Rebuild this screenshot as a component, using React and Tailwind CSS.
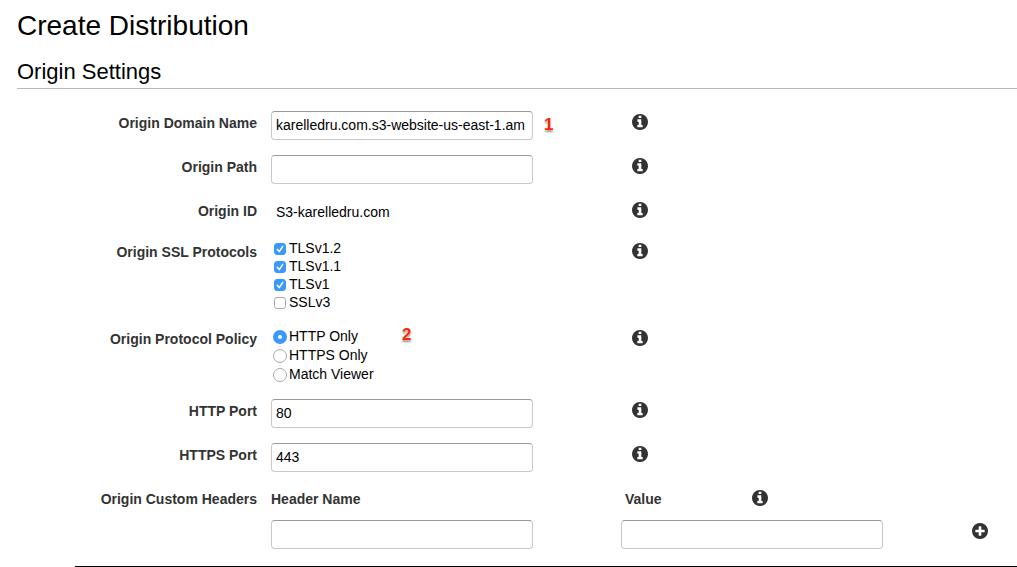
import React, { useState } from 'react'

const inputClass =
  'block h-[29px] w-[262px] rounded border border-[#c8c8c8] border-t-[#999] bg-white px-1 pb-0.5 text-sm text-black outline-none'

function InfoIcon() {
  return (
    <svg viewBox="128 128 1536 1536" className="size-4" fill="currentColor">
      <path d="M1152 1376v-160q0-14-9-23t-23-9h-96v-512q0-14-9-23t-23-9h-320q-14 0-23 9t-9 23v160q0 14 9 23t23 9h96v320h-96q-14 0-23 9t-9 23v160q0 14 9 23t23 9h448q14 0 23-9t9-23zM1024 480v-160q0-14-9-23t-23-9h-192q-14 0-23 9t-9 23v160q0 14 9 23t23 9h192q14 0 23-9t9-23zM1664 896q0 209-103 385.5t-279.5 279.5-385.5 103-385.5-103-279.5-279.5-103-385.5 103-385.5 279.5-279.5 385.5-103 385.5 103 279.5 279.5 103 385.5z" />
    </svg>
  )
}

function PlusIcon() {
  return (
    <svg viewBox="128 128 1536 1536" className="size-4" fill="currentColor">
      <path d="M1344 960v-128q0-26-19-45t-45-19h-256v-256q0-26-19-45t-45-19h-128q-26 0-45 19t-19 45v256h-256q-26 0-45 19t-19 45v128q0 26 19 45t45 19h256v256q0 26 19 45t45 19h128q26 0 45-19t19-45v-256h256q26 0 45-19t19-45zM1664 896q0 209-103 385.5t-279.5 279.5-385.5 103-385.5-103-279.5-279.5-103-385.5 103-385.5 279.5-279.5 385.5-103 385.5 103 279.5 279.5 103 385.5z" />
    </svg>
  )
}

function IconButton({ label, children }) {
  return (
    <button type="button" aria-label={label} className="flex h-[22px] items-center text-[#333]">
      {children}
    </button>
  )
}

function Marker({ children }) {
  return (
    <span className="text-[17px] leading-7 font-bold text-[#fb2605] [text-shadow:0_0_2px_#fff,0_2px_2px_#888]">
      {children}
    </span>
  )
}

function Row({ label, htmlFor, children }) {
  return (
    <div className="grid grid-cols-[240px_336px_1fr] gap-x-[14px]">
      {htmlFor ? (
        <label htmlFor={htmlFor} className="text-right text-sm leading-6 font-bold text-[#333]">
          {label}
        </label>
      ) : (
        <span className="text-right text-sm leading-6 font-bold text-[#333]">{label}</span>
      )}
      {children}
      <div className="pl-[11px]">
        <IconButton label={`About ${label}`}>
          <InfoIcon />
        </IconButton>
      </div>
    </div>
  )
}

function Checkbox({ label, checked, onChange }) {
  return (
    <label className="flex h-[18px] items-center gap-[3px] pl-[3px] text-sm leading-4">
      <span className="relative flex">
        <input
          type="checkbox"
          checked={checked}
          onChange={onChange}
          className="size-3 appearance-none rounded-[3px] border border-[#aaa] bg-white checked:border-[#3b99fc] checked:bg-[#3b99fc]"
        />
        {checked && (
          <svg viewBox="0 0 12 12" className="pointer-events-none absolute inset-0 size-3">
            <path d="M3.4 6.4 5.3 8.6 8.7 3.4" fill="none" stroke="#fff" strokeWidth="1.5" strokeLinecap="round" />
          </svg>
        )}
      </span>
      <span className="pb-0.5">{label}</span>
    </label>
  )
}

function Radio({ label, checked, onChange }) {
  return (
    <label className="flex h-[19px] items-center gap-0.5 pl-0.5 text-sm leading-[19px]">
      <input
        type="radio"
        name="protocolPolicy"
        checked={checked}
        onChange={onChange}
        className="size-[14px] appearance-none rounded-full border border-[#aaa] bg-white checked:border-5 checked:border-[#3b99fc]"
      />
      {label}
    </label>
  )
}

function App() {
  const [protocols, setProtocols] = useState({
    'TLSv1.2': true,
    'TLSv1.1': true,
    TLSv1: true,
    SSLv3: false,
  })
  const [policy, setPolicy] = useState('HTTP Only')

  return (
    <div className="min-h-screen overflow-x-hidden bg-white pl-[17px] font-['Liberation_Sans',Arial,sans-serif] text-black">
      <h1 className="pt-2 text-[28px] leading-9">Create Distribution</h1>
      <h2 className="mt-3 border-b border-[#b8b8b8] text-[22px] leading-8">Origin Settings</h2>

      <form className="mt-[22px] flex flex-col gap-[15px]">
        <Row label="Origin Domain Name" htmlFor="domain">
          <div className="flex gap-[11px]">
            <input
              id="domain"
              type="text"
              defaultValue="karelledru.com.s3-website-us-east-1.am"
              className={inputClass}
            />
            <Marker>1</Marker>
          </div>
        </Row>

        <Row label="Origin Path" htmlFor="path">
          <input id="path" type="text" className={inputClass} />
        </Row>

        <Row label="Origin ID">
          <span className="h-[26px] pl-[5px] text-sm leading-[26px]">S3-karelledru.com</span>
        </Row>

        <Row label="Origin SSL Protocols">
          <div>
            {Object.keys(protocols).map((name) => (
              <Checkbox
                key={name}
                label={name}
                checked={protocols[name]}
                onChange={() => setProtocols({ ...protocols, [name]: !protocols[name] })}
              />
            ))}
          </div>
        </Row>

        <Row label="Origin Protocol Policy">
          <div className="flex">
            <div className="w-[131px]">
              {['HTTP Only', 'HTTPS Only', 'Match Viewer'].map((name) => (
                <Radio key={name} label={name} checked={policy === name} onChange={() => setPolicy(name)} />
              ))}
            </div>
            <div className="-mt-1.5">
              <Marker>2</Marker>
            </div>
          </div>
        </Row>

        <Row label="HTTP Port" htmlFor="http">
          <input id="http" type="text" defaultValue="80" className={inputClass} />
        </Row>

        <Row label="HTTPS Port" htmlFor="https">
          <input id="https" type="text" defaultValue="443" className={inputClass} />
        </Row>

        <div className="grid grid-cols-[240px_336px_1fr] gap-x-[14px] gap-y-[9px] text-sm leading-6 font-bold text-[#333]">
          <span className="text-right">Origin Custom Headers</span>
          <label htmlFor="headerName">Header Name</label>
          <div className="flex pl-1">
            <label htmlFor="headerValue" className="w-[127px]">
              Value
            </label>
            <IconButton label="About Origin Custom Headers">
              <InfoIcon />
            </IconButton>
          </div>
          <input id="headerName" type="text" className={`${inputClass} col-start-2 font-normal`} />
          <div className="flex gap-[89px]">
            <input id="headerValue" type="text" className={`${inputClass} font-normal`} />
            <IconButton label="Add header">
              <PlusIcon />
            </IconButton>
          </div>
        </div>
      </form>

      <hr className="mt-[17px] ml-[58px] border-black" />
    </div>
  )
}

export default App
